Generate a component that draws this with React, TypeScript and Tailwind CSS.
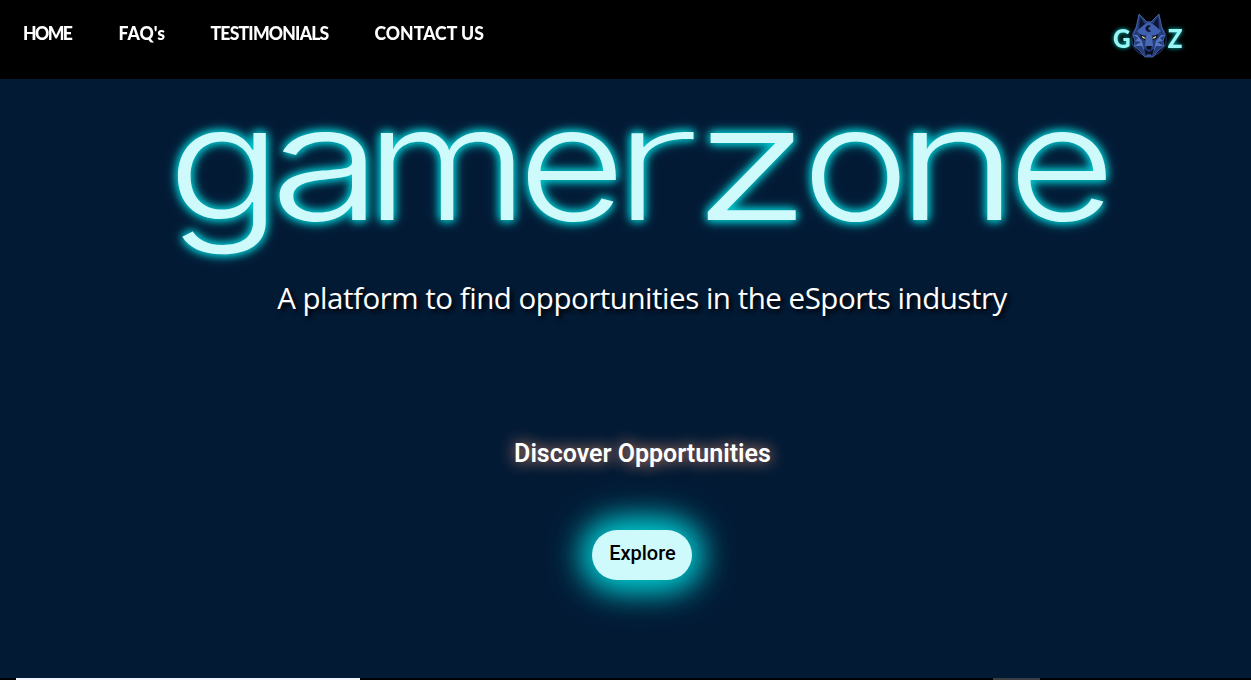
type Link = { label: string; className: string };

const links: Link[] = [
  { label: "HOME", className: "w-[95.5px] tracking-[-1.6px]" },
  { label: "FAQ's", className: "w-[92px] tracking-[0.05px]" },
  { label: "TESTIMONIALS", className: "w-[164px] tracking-[-0.8px]" },
  { label: "CONTACT US", className: "tracking-[0.02px]" },
];

// width and gap lay the letters out; bearing and scale stretch the glyph to its cell
const letters = [
  { char: "g", width: 90, gap: 12, bearing: 8, scale: 1.19, weight: 340 },
  { char: "a", width: 89, gap: 12, bearing: 7, scale: 1.29, weight: 330 },
  { char: "m", width: 134, gap: 13, bearing: 12.5, scale: 1.18, weight: 310 },
  { char: "e", width: 89, gap: 14, bearing: 8, scale: 1.17, weight: 340 },
  { char: "r", width: 68, gap: 9, bearing: 13.5, scale: 1.73, weight: 240 },
  { char: "z", width: 90, gap: 14, bearing: 10, scale: 1.35, weight: 340 },
  { char: "o", width: 90, gap: 12, bearing: 8, scale: 1.14, weight: 340 },
  { char: "n", width: 90, gap: 14, bearing: 13, scale: 1.31, weight: 290 },
  { char: "e", width: 90, gap: 0, bearing: 8, scale: 1.17, weight: 340 },
];

function Wolf() {
  return (
    <svg className="h-[46px] w-[38px] shrink-0" viewBox="0 0 38 46" fill="none">
      <ellipse cx="19" cy="26" rx="17.2" ry="17" stroke="#1c2c5e" strokeWidth="1.2" />
      <path d="M9 1 L17 9 H21 L29 1 L32 15 L35 22 L33 28 L34 33 L28 38 L23 44 H15 L10 38 L4 33 L5 28 L3 22 L6 15Z" fill="#243c78" stroke="#547bca" strokeWidth=".7" />
      <path d="M10 4 L15 11 L9 16Z M28 4 L23 11 L29 16Z" fill="#0c1532" />
      <path d="M7 18 L14 12 L19 9 L24 12 L31 18 L27 22 L22 22 L19 27 L16 22 L11 22Z" fill="#3e60af" />
      <path d="M3 22 L8 25 L5 28 L11 29 L4 33 L12 33 L15 40 L12 28 L7 22Z M35 22 L30 25 L33 28 L27 29 L34 33 L26 33 L23 40 L26 28 L31 22Z" fill="#5577c4" />
      <path d="M16 23 L19 21 L22 23 L23 33 L19 37 L15 33Z" fill="#4868b4" />
      <path d="M10 21 L16 24 L15 27 L11 25Z M28 21 L22 24 L23 27 L27 25Z" fill="#080d20" />
      <path d="M12 23.2 L15.5 25.2 L13 25Z M26 23.2 L22.5 25.2 L25 25Z" fill="#fff9b0" stroke="#ece9a6" strokeWidth=".5" />
      <path d="M16 33 H22 L21 36 L19 37 L17 36Z M14 36 L19 39 L24 36 L22 42 H16Z" fill="#080d20" />
      <path d="M20.5 13 A3 3 0 1 0 20.5 18 A2.5 2.5 0 1 1 20.5 13Z" fill="#0a1026" stroke="#0a1026" strokeWidth=".7" />
      <path d="M17 42 H21" stroke="#5577c4" />
    </svg>
  );
}

export default function App() {
  return (
    <div className="flex h-[680px] w-[1251px] flex-col overflow-hidden bg-[#031a35] text-white">
      <header className="flex h-[79px] shrink-0 items-start justify-between bg-black pl-[23px] pr-[69px]">
        <nav className="flex pt-[23px] font-['Lato',sans-serif] text-[17.6px] font-black leading-[22px]">
          {links.map((link) => (
            <a key={link.label} href="#" className={`block origin-bottom scale-y-105 whitespace-nowrap ${link.className}`}>
              {link.label}
            </a>
          ))}
        </nav>
        <div className="flex items-start pt-[13px] font-['Lato',sans-serif] text-[27px] font-black leading-[50px] text-[#9af6f4] [text-shadow:0_0_5px_#0cc]">
          <span className="flex w-[17px] justify-center"><span className="scale-x-90">G</span></span>
          <Wolf />
          <span className="flex w-[14px] justify-center"><span className="scale-x-90">Z</span></span>
        </div>
      </header>

      <main className="flex grow flex-col items-center pl-[33px]">
        <h1 className="mt-[3px] flex h-[160px] w-[930px] font-['Inter',sans-serif] text-[159px] leading-[160px] text-[#cffafc] [filter:drop-shadow(0_0_4px_#00c5cc)_drop-shadow(0_0_5px_#00c5cc)]">
          {letters.map((l, i) => (
            <span key={i} className="block shrink-0" style={{ width: l.width, marginRight: l.gap }}>
              <span
                className="block w-max origin-left"
                style={{ fontWeight: l.weight, transform: `scaleX(${l.scale}) translateX(${-l.bearing}px)` }}
              >
                {l.char}
              </span>
            </span>
          ))}
        </h1>
        <p className="mt-[35px] whitespace-nowrap font-['Open_Sans',sans-serif] text-[29.5px] leading-[42px] tracking-[-0.48px] [text-shadow:3px_3px_4px_#000]">
          A platform to find opportunities in the eSports industry
        </p>
        <h2 className="mt-[120px] pl-px font-['Roboto',sans-serif] text-[25px] font-semibold leading-[30px] [text-shadow:0_0_15px_#ffa07a]">
          Discover Opportunities
        </h2>
        <button className="mt-[61px] h-[50px] w-[100px] rounded-[25px] bg-[#cffafc] pb-1 pl-px font-['Roboto',sans-serif] text-[20px] font-medium text-black shadow-[0_0_40px_4px_#00c5cc,0_0_30px_6px_#00c5cc]">
          Explore
        </button>
      </main>

      <footer className="flex h-[2px] shrink-0 bg-black">
        <div className="ml-4 w-[344px] bg-[#f4f6fb]" />
        <div className="ml-[633px] w-[47px] bg-[#3b3d42]" />
      </footer>
    </div>
  );
}
